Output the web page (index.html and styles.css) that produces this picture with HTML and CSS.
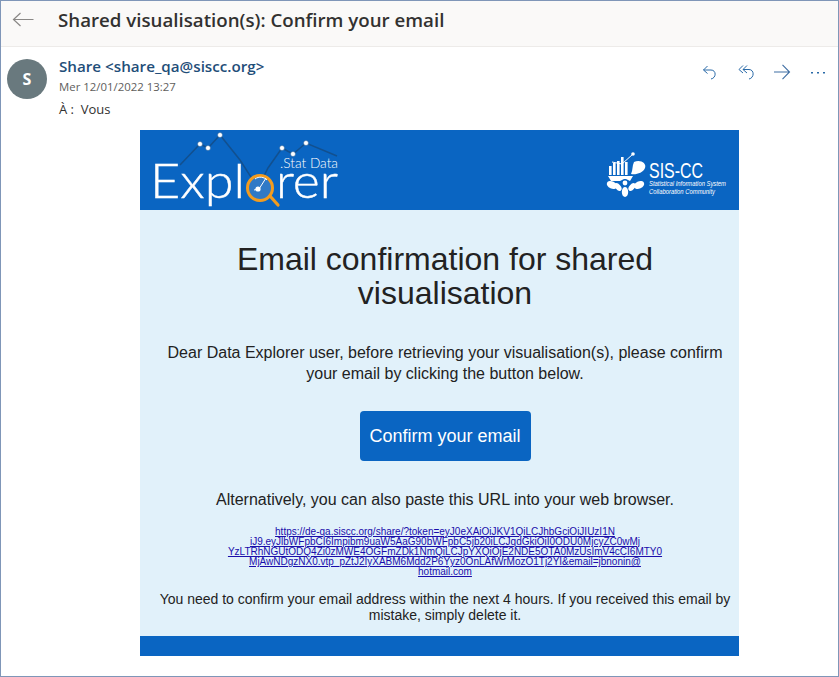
FILE: index.html
```html
<!DOCTYPE html>
<html lang="en">
<head>
    <meta charset="UTF-8">
    <meta name="viewport" content="width=device-width, initial-scale=1.0">
    <title>Shared visualisation(s): Confirm your email</title>
    <link rel="stylesheet" href="styles.css">
</head>
<body>
    <div class="window">
        <!-- Subject bar -->
        <header class="subject-bar">
            <svg class="back-icon" width="24" height="18" viewBox="0 0 24 18">
                <path d="M21.5,8.5 L1.5,8.5 M8.5,2 L1.5,8.5 L8.5,15" fill="none" stroke="#8a8886" stroke-width="1.2" />
            </svg>
            <h1 class="subject">Shared visualisation(s): Confirm your email</h1>
        </header>

        <!-- Sender row -->
        <section class="sender-row">
            <div class="avatar">S</div>
            <div class="sender-info">
                <div class="sender-name">Share &lt;share_qa@siscc.org&gt;</div>
                <div class="sender-date">Mer 12/01/2022 13:27</div>
                <div class="sender-to">À :&nbsp; Vous</div>
            </div>
            <div class="actions">
                <svg width="16" height="16" viewBox="0 0 16 16">
                    <path d="M5.5,2 L1.5,6 L5.5,9.5 M1.5,6 L9,6 C14.5,6 14.5,14 9,15" fill="none" stroke="#2a6aa8" stroke-width="1" />
                </svg>
                <svg width="20" height="16" viewBox="0 0 20 16">
                    <path d="M5,1.5 L1,5.5 L5,9 M9,1.5 L5,5.5 L9,9 M5,5.5 L11,5.5 C16.5,5.5 16.5,14 11,15" fill="none" stroke="#2a6aa8" stroke-width="1" />
                </svg>
                <svg width="17" height="16" viewBox="0 0 17 16">
                    <path d="M0,8 L15.5,8 M8.5,0.8 L15.5,8 L8.5,15.2" fill="none" stroke="#3f6ea3" stroke-width="1.1" />
                </svg>
                <svg width="16" height="16" viewBox="0 0 16 16">
                    <rect x="1" y="8" width="2" height="1.5" fill="#2a6aa8" />
                    <rect x="7" y="8" width="2" height="1.5" fill="#2a6aa8" />
                    <rect x="13" y="8" width="2" height="1.5" fill="#2a6aa8" />
                </svg>
            </div>
        </section>

        <!-- Email body -->
        <main class="mail">
            <div class="banner">
                <svg width="599" height="80" viewBox="0 0 599 80">
                    <!-- Explorer logo -->
                    <polyline points="40,35 60,14 68,18 80,5 100,30 118,58 128,38 142,18 153,24 166,13 197,26" fill="none" stroke="#12508f" stroke-width="1.5" />
                    <g fill="#ffffff" stroke="#12508f" stroke-width="0.5">
                        <circle cx="60" cy="14" r="2.5" />
                        <circle cx="68" cy="18" r="2.5" />
                        <circle cx="80" cy="5" r="2.5" />
                        <circle cx="142" cy="18" r="2.5" />
                        <circle cx="153" cy="24" r="2.5" />
                        <circle cx="166" cy="13" r="2.5" />
                    </g>
                    <text class="logo-word" x="10" y="68" textLength="95" lengthAdjust="spacingAndGlyphs">Expl</text>
                    <text class="logo-word" x="136" y="68" textLength="62" lengthAdjust="spacingAndGlyphs">rer</text>
                    <text class="logo-stat" x="140" y="38" textLength="58" lengthAdjust="spacingAndGlyphs">.Stat Data</text>
                    <circle cx="120" cy="58" r="12.5" fill="#3079c6" stroke="#f39c1f" stroke-width="3" />
                    <path d="M130,66 L138,75" stroke="#f39c1f" stroke-width="3.2" stroke-linecap="round" />
                    <path d="M114,60 L119,59 L126,48 M115,49 C119,46 124,47 127,50" fill="none" stroke="#ffffff" stroke-width="1" />
                    <circle cx="118" cy="59" r="2.6" fill="#ffffff" />

                    <!-- SIS-CC logo -->
                    <g fill="#ffffff">
                        <rect x="469" y="36" width="2.6" height="9" />
                        <rect x="473" y="33" width="2.6" height="12" />
                        <rect x="477" y="31" width="2.6" height="14" />
                        <rect x="481" y="27" width="2.6" height="18" />
                        <rect x="485" y="32" width="2.6" height="13" />
                        <path d="M468,46 L493,46 L490,51 L486,49 L484,49 L480,51 L471,51 Z" />
                        <path d="M494,32 C500,29 507,33 505,38 C503,43 496,45 491,44 C493,40 492,36 494,32 Z" />
                        <ellipse cx="472" cy="55" rx="5.5" ry="3.6" transform="rotate(25 472 55)" />
                        <ellipse cx="499" cy="55" rx="5.5" ry="3.6" transform="rotate(-25 499 55)" />
                        <ellipse cx="485" cy="62" rx="3.2" ry="5" />
                        <ellipse cx="478" cy="57" rx="4.5" ry="2.6" transform="rotate(50 478 57)" />
                        <ellipse cx="492" cy="57" rx="4.5" ry="2.6" transform="rotate(-50 492 57)" />
                        <circle cx="485" cy="53" r="2.4" />
                    </g>
                    <path d="M472,32 L482,34 L493,24" fill="none" stroke="#ffffff" stroke-width="1" />
                    <circle cx="493" cy="24" r="1.8" fill="#ffffff" />
                    <text class="logo-sis" x="509" y="48" textLength="54" lengthAdjust="spacingAndGlyphs">SIS-CC</text>
                    <text class="logo-small" x="509" y="56" textLength="77" lengthAdjust="spacingAndGlyphs">Statistical Information System</text>
                    <text class="logo-small" x="509" y="64" textLength="66" lengthAdjust="spacingAndGlyphs">Collaboration Community</text>
                </svg>
            </div>

            <div class="content">
                <h2 class="title">Email confirmation for shared visualisation</h2>
                <p class="intro">Dear Data Explorer user, before retrieving your visualisation(s), please confirm your email by clicking the button below.</p>
                <a class="confirm-button" href="#">Confirm your email</a>
                <p class="alt">Alternatively, you can also paste this URL into your web browser.</p>
                <p class="url"><a href="#">https://de-qa.siscc.org/share/?token=eyJ0eXAiOiJKV1QiLCJhbGciOiJIUzI1N<br>iJ9.eyJlbWFpbCI6Impibm9uaW5AaG90bWFpbC5jb20iLCJqdGkiOiI0ODU0MjcyZC0wMj<br>YzLTRhNGUtODQ4Zi0zMWE4OGFmZDk1NmQiLCJpYXQiOjE2NDE5OTA0MzUsImV4cCI6MTY0<br>MjAwNDgzNX0.vtp_pZtJ2IyXABM6Mdd2P6Yyz0OnLAfWrMozO1Tj2YI&amp;email=jbnonin@<br>hotmail.com</a></p>
                <p class="notice">You need to confirm your email address within the next 4 hours. If you received this email by mistake, simply delete it.</p>
            </div>

            <div class="mail-footer"></div>
        </main>
    </div>
</body>
</html>
```

FILE: styles.css
```css
* {
    box-sizing: border-box;
}
html, body {
    margin: 0;
    height: 100%;
}
body {
    background-color: #ffffff;
    font-family: "Open Sans", "Noto Sans", sans-serif;
    overflow: hidden;
}
.window {
    height: 677px;
    border: 1px solid #7f96b8;
    background-color: #ffffff;
}
.subject-bar {
    display: flex;
    align-items: center;
    height: 46px;
    padding-left: 11px;
    background-color: #faf9f8;
    border-bottom: 1px solid #edebe9;
}
.back-icon {
    margin-top: -8px;
}
.subject {
    margin: -9px 0 0 22px;
    font-size: 18.7px;
    font-weight: 600;
    color: #323130;
}
.sender-row {
    display: flex;
    height: 83px;
    padding: 12px 0 0 6px;
}
.avatar {
    display: flex;
    align-items: center;
    justify-content: center;
    width: 40px;
    height: 40px;
    border-radius: 50%;
    background-color: #69797e;
    color: #ffffff;
    font-size: 16px;
    font-weight: 700;
}
.sender-info {
    margin-left: 12px;
}
.sender-name {
    margin-top: -3px;
    font-size: 15.2px;
    font-weight: 600;
    line-height: 20px;
    color: #1f4e79;
}
.sender-date {
    margin-top: 2px;
    font-size: 11.4px;
    line-height: 18px;
    color: #605e5c;
}
.sender-to {
    margin-top: 4px;
    font-size: 13px;
    line-height: 18px;
    color: #323130;
}
.actions {
    display: grid;
    grid-template-columns: 36px 36px 36px 16px;
    align-content: start;
    margin-left: auto;
    padding: 5px 12px 0 0;
}
.mail {
    width: 599px;
    margin-left: 139px;
}
.banner {
    height: 80px;
    background-color: #0a65c2;
}
.banner svg {
    display: block;
}
.logo-word {
    font-family: "Lato", sans-serif;
    font-size: 48px;
    font-weight: 300;
    fill: #ffffff;
    stroke: #ffffff;
    stroke-width: 0.4px;
}
.logo-stat {
    font-family: "Lato", sans-serif;
    font-size: 14px;
    font-weight: 300;
    fill: #ffffff;
}
.logo-sis {
    font-family: "Liberation Sans", sans-serif;
    font-size: 22px;
    fill: #ffffff;
}
.logo-small {
    font-family: "Liberation Sans", sans-serif;
    font-size: 6.5px;
    font-style: italic;
    fill: #ffffff;
}
.content {
    display: flex;
    flex-direction: column;
    align-items: center;
    height: 426px;
    padding: 32px 0 0 11px;
    background-color: #e1f1fa;
    font-family: "Liberation Sans", Arial, sans-serif;
    color: #222222;
    text-align: center;
}
.title {
    width: 440px;
    margin: 0;
    font-size: 32px;
    font-weight: normal;
    line-height: 34px;
}
.intro {
    width: 560px;
    margin: 32px 0 0;
    font-size: 16px;
    line-height: 21px;
}
.confirm-button {
    display: flex;
    align-items: center;
    justify-content: center;
    width: 171px;
    height: 50px;
    margin-top: 27px;
    border-radius: 4px;
    background-color: #0a65c2;
    color: #ffffff;
    font-size: 18px;
    text-decoration: none;
}
.alt {
    margin: 29px 0 0;
    font-size: 16px;
    line-height: 20px;
}
.url {
    margin: 17px 0 0;
    font-size: 10px;
    line-height: 10px;
}
.url a {
    color: #1a0dab;
}
.notice {
    width: 580px;
    margin: 14px 0 0;
    font-size: 14px;
    line-height: 16px;
}
.mail-footer {
    height: 20px;
    background-color: #0a65c2;
}
```
